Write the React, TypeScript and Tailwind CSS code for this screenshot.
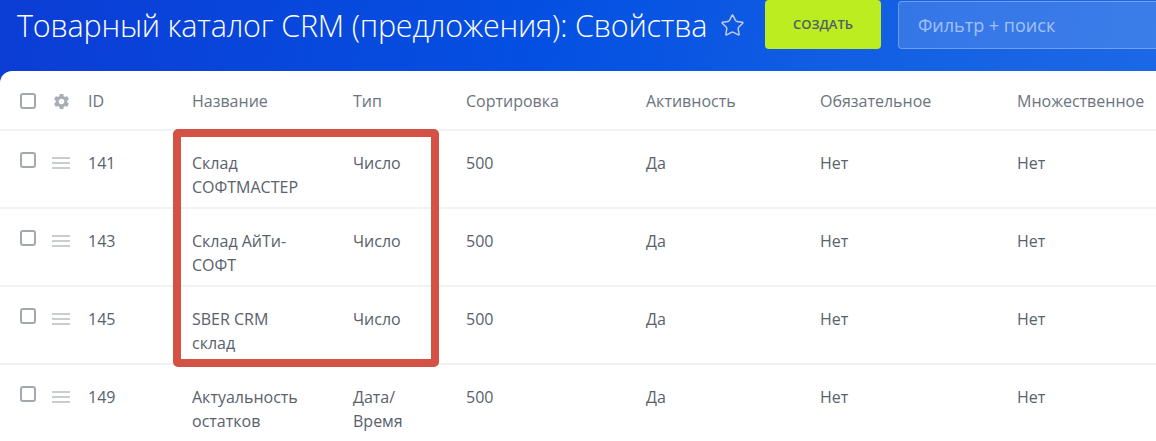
import React from "react";
import { MdSettings } from "react-icons/md";
import { Star } from "lucide-react";

const cols =
  "grid grid-cols-[32px_36px_104px_161px_113px_180px_174px_197px_1fr] pl-[20px]";

type Row = {
  id: string;
  name: string[];
  type: string[];
};

const rows: Row[] = [
  { id: "141", name: ["Склад", "СОФТМАСТЕР"], type: ["Число"] },
  { id: "143", name: ["Склад АйТи-", "СОФТ"], type: ["Число"] },
  { id: "145", name: ["SBER CRM", "склад"], type: ["Число"] },
  { id: "149", name: ["Актуальность", "остатков"], type: ["Дата/", "Время"] },
];

function Checkbox() {
  return (
    <div className="w-[16px] h-[16px] rounded-[3px] border-2 border-[#a3a8af] bg-white" />
  );
}

function Burger() {
  return (
    <div className="flex flex-col gap-[3px] w-[18px] mt-[6px]">
      <div className="h-[2px] bg-[#c9ccd1]" />
      <div className="h-[2px] bg-[#c9ccd1]" />
      <div className="h-[2px] bg-[#c9ccd1]" />
    </div>
  );
}

function Lines({ lines }: { lines: string[] }) {
  return (
    <div>
      {lines.map((l, i) => (
        <div key={i} className="whitespace-nowrap">
          {l}
        </div>
      ))}
    </div>
  );
}

export default function App() {
  return (
    <div
      className="relative w-[1156px] h-[441px] overflow-hidden flex flex-col bg-[linear-gradient(100deg,#0c3dd5_0%,#0450e2_45%,#1561e4_75%,#1d6ae6_100%)]"
      style={{ fontFamily: '"Open Sans", "Noto Sans", sans-serif' }}
    >
      {/* Top bar */}
      <div className="h-[71px] flex items-start shrink-0">
        <div className="w-[765px] flex items-center pl-[17px] pt-[3px] h-[48px]">
          <div className="text-[30.5px] font-light text-white leading-none tracking-[-0.2px] whitespace-nowrap">
            Товарный каталог CRM (предложения): Свойства
          </div>
          <Star
            className="ml-[13px] text-[#c3cde4]"
            size={25}
            strokeWidth={1.4}
          />
        </div>
        <div className="w-[116px] h-[49px] bg-[#bbed21] rounded-[4px] flex items-center justify-center text-[13px] font-semibold text-[#535c69]">
          СОЗДАТЬ
        </div>
        <div className="ml-[17px] flex-1 h-[48px] mt-[1px] rounded-l-[4px] border border-r-0 border-[rgba(255,255,255,0.28)] bg-[rgba(255,255,255,0.14)] flex items-center pl-[19px] text-[18px] text-[rgba(255,255,255,0.55)]">
          Фильтр + поиск
        </div>
      </div>

      {/* Panel */}
      <div className="flex-1 bg-white rounded-tl-[12px] text-[16px] text-[#58616c]">
        <div
          className={`${cols} h-[60px] items-center pt-[1px] border-b-2 border-[#f1f2f4] text-[#6b737e]`}
        >
          <div className="pt-[1px]">
            <Checkbox />
          </div>
          <div className="text-[#a9aeb5] pt-[1px]">
            <MdSettings size={19} />
          </div>
          <div>ID</div>
          <div>Название</div>
          <div>Тип</div>
          <div>Сортировка</div>
          <div>Активность</div>
          <div>Обязательное</div>
          <div className="whitespace-nowrap">Множественное</div>
        </div>
        {rows.map((r) => (
          <div
            key={r.id}
            className={`${cols} h-[78px] pt-[20px] leading-[24px] border-b-2 border-[#f1f2f4]`}
          >
            <div className="pt-[1px]">
              <Checkbox />
            </div>
            <div>
              <Burger />
            </div>
            <div>{r.id}</div>
            <Lines lines={r.name} />
            <Lines lines={r.type} />
            <div>500</div>
            <div>Да</div>
            <div>Нет</div>
            <div>Нет</div>
          </div>
        ))}
      </div>

      {/* Annotation frame */}
      <div className="absolute left-[173px] top-[129px] w-[266px] h-[238px] border-[8px] border-[#d35244] rounded-[5px] pointer-events-none" />
    </div>
  );
}
